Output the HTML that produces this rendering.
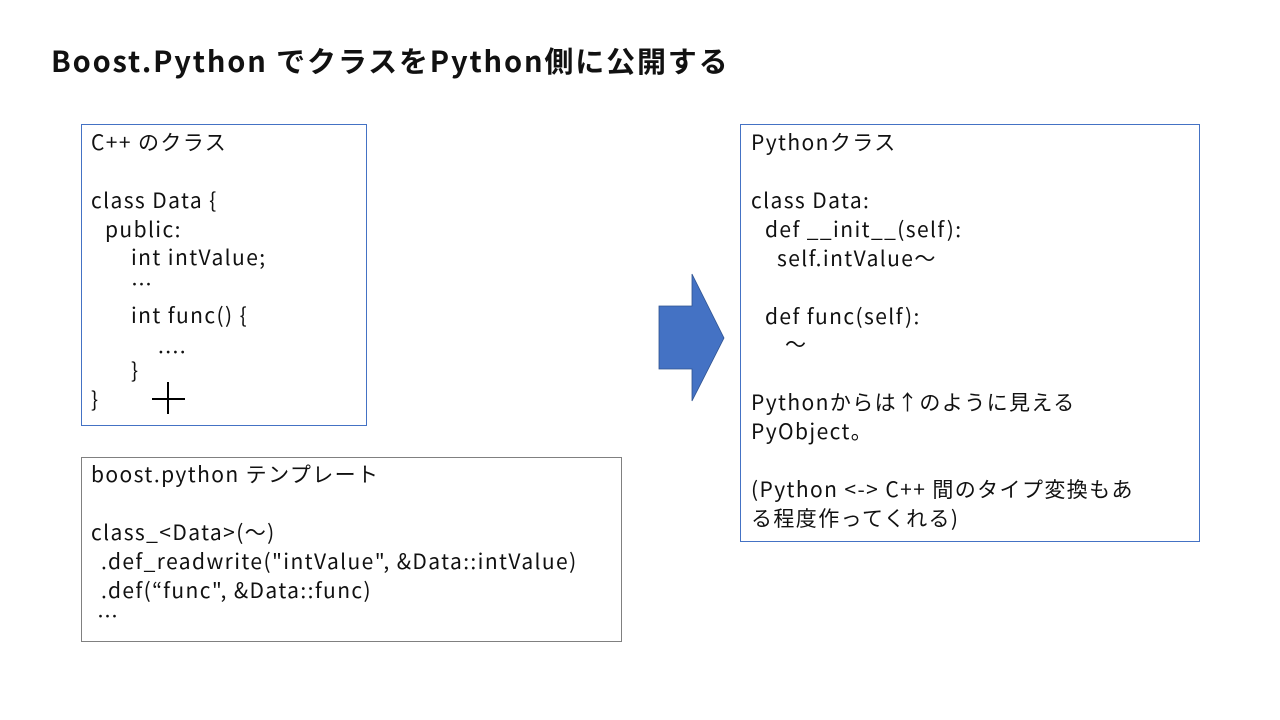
<!DOCTYPE html>
<html><head><meta charset="utf-8"><style>
body{margin:0;width:1280px;height:720px;background:#fff;position:relative;overflow:hidden;font-family:"Noto Sans CJK JP","Liberation Sans",sans-serif;color:#111}
.t{position:absolute;left:51px;top:40px;font-size:29px;font-weight:bold;white-space:nowrap;line-height:40px;letter-spacing:1.85px}
.box{position:absolute;box-sizing:border-box;border:1px solid #4472c4}
.l{position:absolute;font-size:21px;white-space:nowrap;line-height:24px;letter-spacing:1.4px}
</style></head><body>
<div class="t">Boost.Python でクラスをPython側に公開する</div>
<div class="box" style="left:81px;top:124px;width:286px;height:302px"></div>
<div class="l" style="left:91px;top:130px">C++ のクラス</div>
<div class="l" style="left:91px;top:188px">class Data {</div>
<div class="l" style="left:105px;top:217px">public:</div>
<div class="l" style="left:131px;top:245px">int intValue;</div>
<div class="l" style="left:131px;top:272px">…</div>
<div class="l" style="left:131px;top:303px">int func() {</div>
<div class="l" style="left:158px;top:333px">....</div>
<div class="l" style="left:131px;top:358px">}</div>
<div class="l" style="left:91px;top:387px">}</div>
<div style="position:absolute;left:152px;top:398px;width:33px;height:2px;background:#000"></div>
<div style="position:absolute;left:167px;top:382px;width:2px;height:32px;background:#000"></div>

<div class="box" style="left:81px;top:457px;width:541px;height:185px;border-color:#808080"></div>
<div class="l" style="left:91px;top:462px">boost.python テンプレート</div>
<div class="l" style="left:91px;top:520px">class_&lt;Data&gt;(〜)</div>
<div class="l" style="left:101px;top:549px">.def_readwrite("intValue", &amp;Data::intValue)</div>
<div class="l" style="left:101px;top:578px">.def(“func", &amp;Data::func)</div>
<div class="l" style="left:97px;top:604px">…</div>

<svg style="position:absolute;left:0;top:0" width="1280" height="720"><polygon points="659,306 692,306 692,274 724,338 692,401 692,369 659,369" fill="#4472c4" stroke="#2f528f" stroke-width="0.8"/></svg>

<div class="box" style="left:740px;top:124px;width:460px;height:418px"></div>
<div class="l" style="left:751px;top:130px">Pythonクラス</div>
<div class="l" style="left:751px;top:188px">class Data:</div>
<div class="l" style="left:765px;top:217px">def __init__(self):</div>
<div class="l" style="left:777px;top:246px">self.intValue〜</div>
<div class="l" style="left:765px;top:304px">def func(self):</div>
<div class="l" style="left:785px;top:332px">〜</div>
<div class="l" style="left:751px;top:390px">Pythonからは↑のように見える</div>
<div class="l" style="left:751px;top:419px">PyObject。</div>
<div class="l" style="left:751px;top:477px">(Python &lt;-&gt; C++ 間のタイプ変換もあ</div>
<div class="l" style="left:751px;top:506px">る程度作ってくれる)</div>
</body></html>
